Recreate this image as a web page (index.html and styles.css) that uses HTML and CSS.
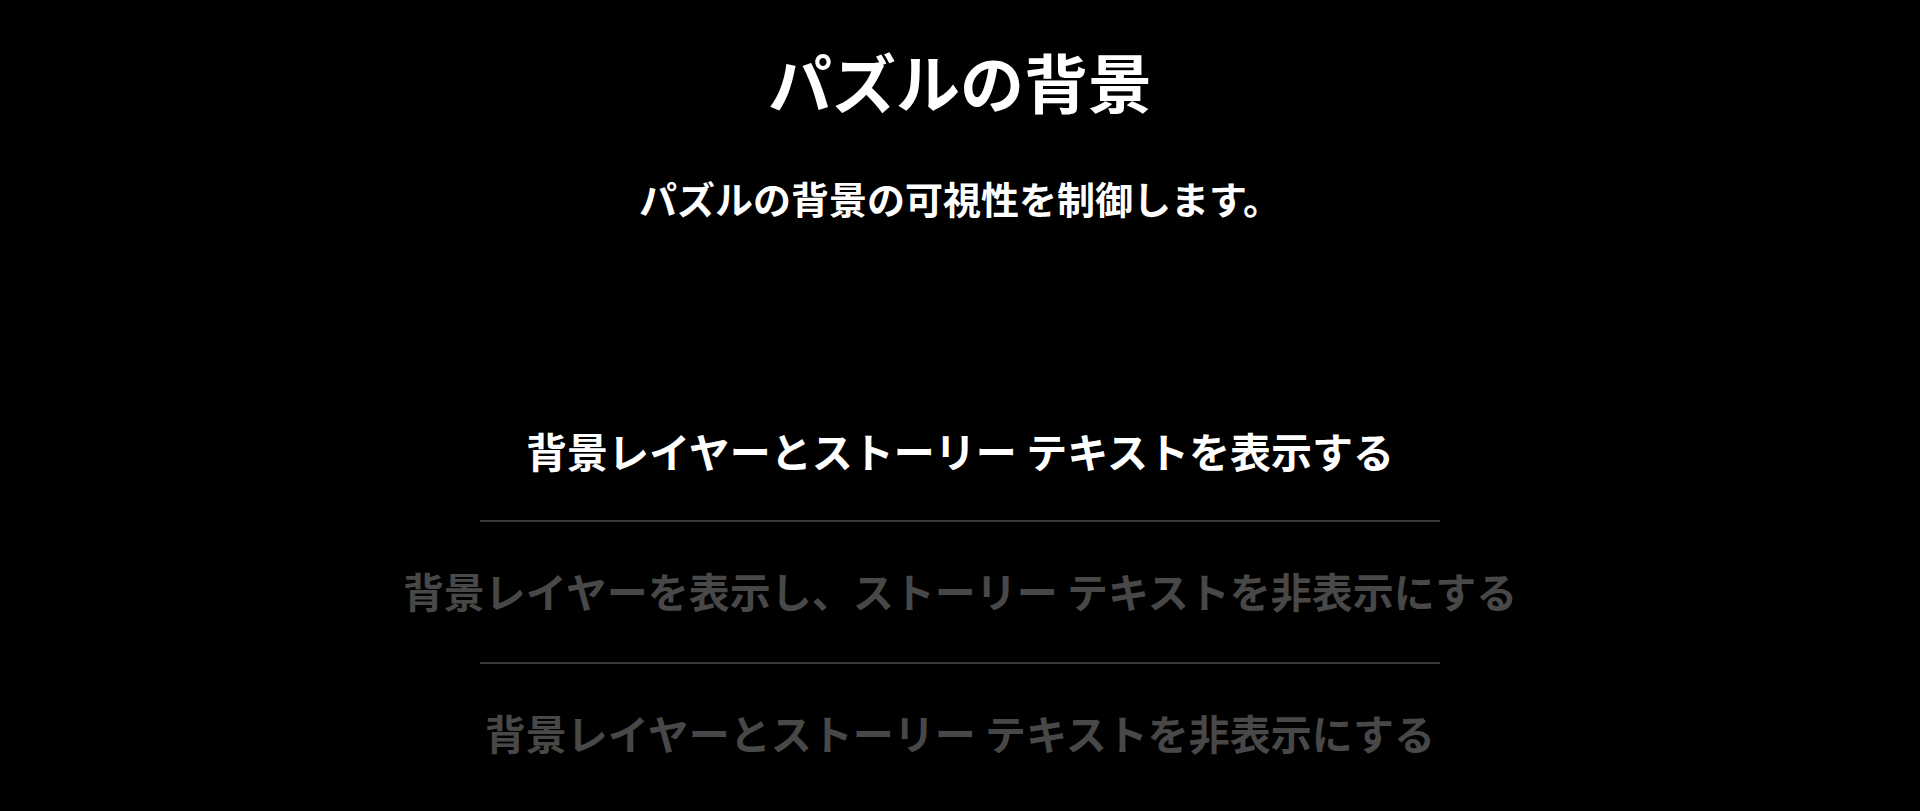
FILE: index.html
```html
<!DOCTYPE html>
<html lang="ja">
<head>
<meta charset="utf-8">
<title>パズルの背景</title>
<link rel="stylesheet" href="styles.css">
</head>
<body>
<main class="page">
  <header class="head">
    <h1 class="title">パズルの背景</h1>
    <p class="subtitle">パズルの背景の可視性を制御します。</p>
  </header>
  <ul class="options">
    <li class="option is-active">背景レイヤーとストーリー テキストを表示する</li>
    <li class="option">背景レイヤーを表示し、ストーリー テキストを非表示にする</li>
    <li class="option">背景レイヤーとストーリー テキストを非表示にする</li>
  </ul>
</main>
</body>
</html>
```

FILE: styles.css
```css
html, body {
  margin: 0;
  padding: 0;
  background: #000;
  height: 100%;
  overflow: hidden;
}

body {
  font-family: "Noto Sans CJK JP", "Noto Sans", sans-serif;
  color: #fff;
}

.page {
  display: flex;
  flex-direction: column;
  align-items: center;
  padding-top: 42px;
}

.head {
  display: flex;
  flex-direction: column;
  align-items: center;
}

.title {
  margin: 0;
  font-size: 64px;
  line-height: 77px;
  font-weight: 700;
}

.subtitle {
  margin: 53px 0 0;
  font-size: 38px;
  line-height: 52px;
  font-weight: 700;
}

.options {
  list-style: none;
  margin: 156px 0 0;
  padding: 0;
  width: 960px;
  display: flex;
  flex-direction: column;
}

.option {
  display: flex;
  justify-content: center;
  white-space: nowrap;
  padding: 42px 0 46px;
  font-size: 41px;
  line-height: 52px;
  font-weight: 700;
  color: #484848;
}

.option:first-child {
  padding: 44px 0;
}

.option + .option {
  border-top: 2px solid #3a3a3a;
}

.option.is-active {
  color: #fff;
}
```
